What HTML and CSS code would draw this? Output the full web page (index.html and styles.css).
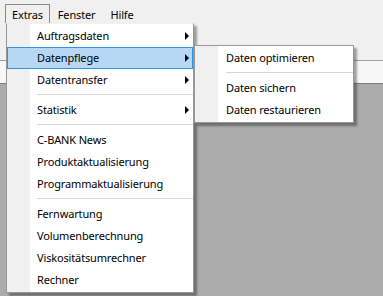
FILE: index.html
```html
<!DOCTYPE html>
<html lang="de">
<head>
    <meta charset="UTF-8">
    <title>Extras</title>
    <link rel="stylesheet" href="styles.css">
</head>
<body>
    <div class="window">
        <div class="menubar">
            <div class="menubar-item open">Extras</div>
            <div class="menubar-item">Fenster</div>
            <div class="menubar-item">Hilfe</div>
        </div>
        <div class="toolbar"></div>
        <div class="strip"></div>
        <div class="client"></div>
    </div>

    <div class="menu main-menu">
        <div class="item sub">Auftragsdaten</div>
        <div class="item sub active">Datenpflege</div>
        <div class="item sub">Datentransfer</div>
        <div class="sep"></div>
        <div class="item sub">Statistik</div>
        <div class="sep"></div>
        <div class="item">C-BANK News</div>
        <div class="item">Produktaktualisierung</div>
        <div class="item">Programmaktualisierung</div>
        <div class="sep"></div>
        <div class="item">Fernwartung</div>
        <div class="item">Volumenberechnung</div>
        <div class="item">Viskositätsumrechner</div>
        <div class="item">Rechner</div>
    </div>

    <div class="menu sub-menu">
        <div class="item">Daten optimieren</div>
        <div class="sep"></div>
        <div class="item">Daten sichern</div>
        <div class="item">Daten restaurieren</div>
    </div>
</body>
</html>
```

FILE: styles.css
```css
body {
    margin: 0;
    font-family: "Noto Sans", "DejaVu Sans", sans-serif;
    font-size: 11px;
    letter-spacing: -0.15px;
    color: #000;
    background: #ababab;
    overflow: hidden;
}
.window {
    display: flex;
    flex-direction: column;
    height: 296px;
}
.menubar {
    display: flex;
    background: #f0f0f0;
    padding: 4px 0 0 5px;
    height: 19px;
}
.menubar-item {
    padding: 0 6px 0 7px;
    line-height: 19px;
    border: 1px solid transparent;
    border-bottom: none;
}
.menubar-item.open {
    border-color: #888;
    padding: 0 6px 0 6px;
}
.toolbar {
    height: 37px;
    background: #f0f0f0;
    border-bottom: 1px solid #a0a0a0;
}
.strip {
    height: 22px;
    background: #f7f7f7;
    border-bottom: 1px solid #7c7c7c;
}
.client {
    flex: 1;
    background: #ababab;
}

/* popup menus */
.menu {
    position: absolute;
    background: linear-gradient(to right, #f0f0f0 0, #f0f0f0 23px, #fff 23px);
    border: 1px solid #979797;
    padding: 1px 0;
    box-shadow: 3px 3px 2px rgba(0, 0, 0, 0.35);
}
.main-menu {
    left: 6px;
    top: 23px;
    width: 186px;
    border-top-color: #f0f0f0;
}
.sub-menu {
    left: 194px;
    top: 45px;
    width: 158px;
}
.item {
    position: relative;
    height: 20px;
    line-height: 20px;
    padding-left: 29px;
    border: 1px solid transparent;
    white-space: nowrap;
}
.sub-menu .item {
    padding-left: 30px;
}
.item.active {
    background: #b6d8f4;
    border-color: #3a8ee0;
}
.item.sub::after {
    content: "";
    position: absolute;
    right: 3px;
    top: 6px;
    border-left: 4px solid #000;
    border-top: 4px solid transparent;
    border-bottom: 4px solid transparent;
}
.sep {
    height: 1px;
    margin: 3px 0 4px 30px;
    background: #d7d7d7;
}
.sub-menu .sep {
    margin-left: 31px;
}
```
